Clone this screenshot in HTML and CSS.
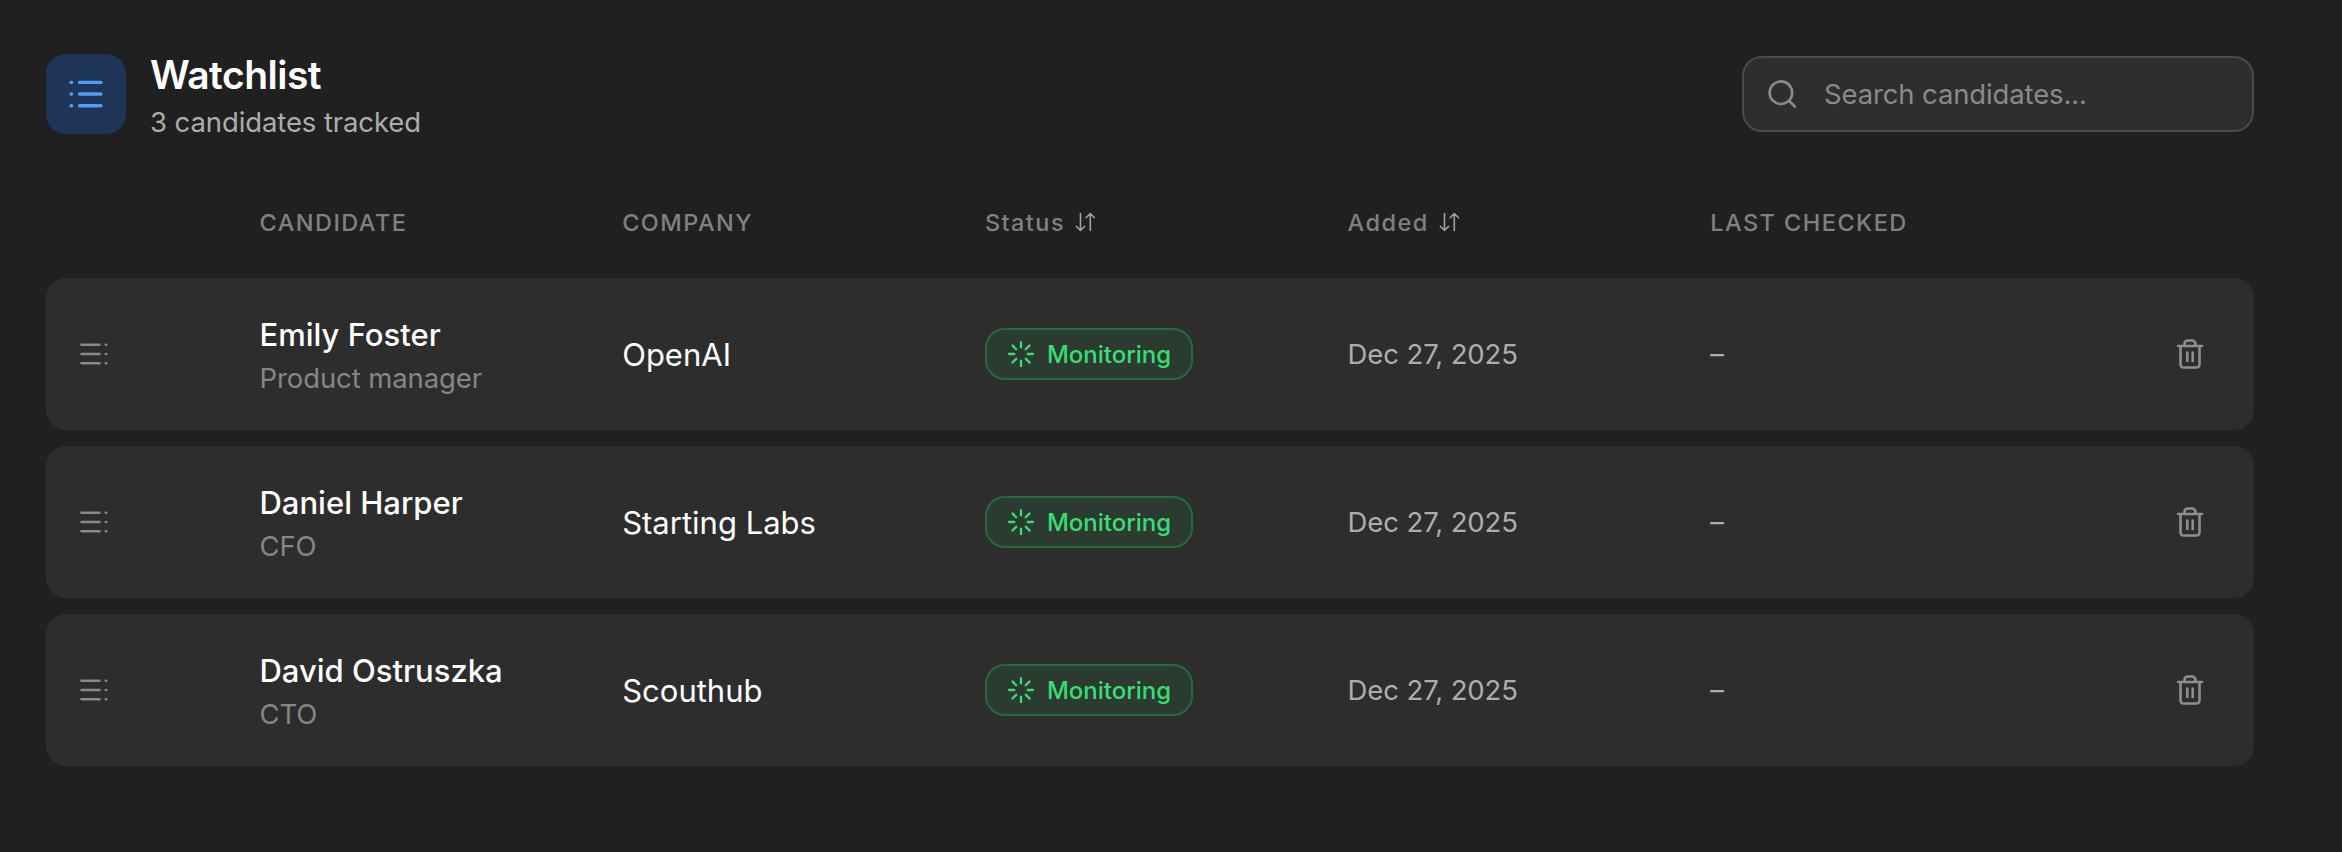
FILE: index.html
```html
<!DOCTYPE html>
<html lang="en">
<head>
    <meta charset="UTF-8">
    <title>Watchlist</title>
    <link rel="stylesheet" href="styles.css">
</head>
<body>
  <svg class="sprite" width="0" height="0">
    <symbol id="icon-handle" viewBox="0 0 32 32">
      <path d="M3.5 6.7h18M3.5 16h18M3.5 25.3h18M27.8 6.7h.4M27.8 16h.4M27.8 25.3h.4"/>
    </symbol>
    <symbol id="icon-sort" viewBox="0 0 24 24">
      <path d="M7.5 3.5v17M3.3 16.3l4.2 4.2 4.2-4.2M17.3 20.5v-17M13.1 7.7l4.2-4.2 4.2 4.2"/>
    </symbol>
    <symbol id="icon-loader" viewBox="0 0 24 24">
      <path d="M12 1.8v4.4M12 17.8v4.4M1.8 12h4.4M17.8 12h4.4M4.8 4.8l3.1 3.1M16.1 16.1l3.1 3.1M4.8 19.2l3.1-3.1M16.1 7.9l3.1-3.1"/>
    </symbol>
    <symbol id="icon-trash" viewBox="0 0 32 32">
      <path d="M4 8h24M6.5 8v18.5a3 3 0 0 0 3 3h13a3 3 0 0 0 3-3V8M10.5 8V6A3.5 3.5 0 0 1 14 2.5h4A3.5 3.5 0 0 1 21.5 6v2M13.3 14.5v8.5M18.7 14.5v8.5"/>
    </symbol>
  </svg>

  <div class="watchlist">
    <div class="header">
      <div class="header-icon">
        <svg viewBox="0 0 40 40"><path d="M13.5 8.4h21.5M13.5 20h21.5M13.5 31.8h21.5M5 8.4h.6M5 20h.6M5 31.8h.6"/></svg>
      </div>
      <div class="header-text">
        <h1>Watchlist</h1>
        <p>3 candidates tracked</p>
      </div>
      <div class="search">
        <svg viewBox="0 0 32 32"><circle cx="14.9" cy="14.7" r="11.3"/><path d="M23 22.8l6 5.9"/></svg>
        <span>Search candidates...</span>
      </div>
    </div>

    <div class="columns">
      <div></div>
      <div class="upper">Candidate</div>
      <div class="upper">Company</div>
      <div class="sortable"><span>Status</span><svg><use href="#icon-sort"/></svg></div>
      <div class="sortable"><span>Added</span><svg><use href="#icon-sort"/></svg></div>
      <div class="upper">Last checked</div>
      <div></div>
    </div>

    <div class="rows">
      <div class="row">
        <svg class="handle"><use href="#icon-handle"/></svg>
        <div class="candidate">
          <div class="name">Emily Foster</div>
          <div class="role">Product manager</div>
        </div>
        <div class="company">OpenAI</div>
        <div><div class="badge"><svg><use href="#icon-loader"/></svg><span>Monitoring</span></div></div>
        <div class="date">Dec 27, 2025</div>
        <div class="date">–</div>
        <svg class="trash"><use href="#icon-trash"/></svg>
      </div>
      <div class="row">
        <svg class="handle"><use href="#icon-handle"/></svg>
        <div class="candidate">
          <div class="name">Daniel Harper</div>
          <div class="role">CFO</div>
        </div>
        <div class="company">Starting Labs</div>
        <div><div class="badge"><svg><use href="#icon-loader"/></svg><span>Monitoring</span></div></div>
        <div class="date">Dec 27, 2025</div>
        <div class="date">–</div>
        <svg class="trash"><use href="#icon-trash"/></svg>
      </div>
      <div class="row">
        <svg class="handle"><use href="#icon-handle"/></svg>
        <div class="candidate">
          <div class="name">David Ostruszka</div>
          <div class="role">CTO</div>
        </div>
        <div class="company">Scouthub</div>
        <div><div class="badge"><svg><use href="#icon-loader"/></svg><span>Monitoring</span></div></div>
        <div class="date">Dec 27, 2025</div>
        <div class="date">–</div>
        <svg class="trash"><use href="#icon-trash"/></svg>
      </div>
    </div>
  </div>
</body>
</html>
```

FILE: styles.css
```css
* {
    box-sizing: border-box;
}

body {
    margin: 0;
    font-family: Inter, "Liberation Sans", sans-serif;
    background-color: #202020;
    color: #ffffff;
}

svg {
    fill: none;
    stroke: currentColor;
    stroke-linecap: round;
    stroke-linejoin: round;
    display: block;
    flex-shrink: 0;
}

.sprite {
    position: absolute;
}

.watchlist {
    height: 852px;
    padding: 50px 88px 0 46px;
    overflow: hidden;
}

/* Header */
.header {
    display: flex;
    align-items: center;
    height: 88px;
}

.header-icon {
    width: 80px;
    height: 80px;
    border-radius: 20px;
    background-color: #1e3557;
    color: #4c9dfc;
    display: flex;
    align-items: center;
    justify-content: center;
}

.header-icon svg {
    width: 40px;
    height: 40px;
    stroke-width: 3.4;
}

.header-text {
    flex: 1;
    margin-left: 24px;
    padding-top: 4px;
}

.header-text h1 {
    margin: 3px 0 0;
    font-size: 39px;
    line-height: 48px;
    font-weight: 600;
    letter-spacing: -0.5px;
}

.header-text p {
    margin: 1px 0 0;
    font-size: 27.5px;
    line-height: 44px;
    letter-spacing: -0.1px;
    color: #adadad;
}

.search {
    display: flex;
    align-items: center;
    gap: 26px;
    width: 512px;
    height: 76px;
    padding-left: 22px;
    border: 2px solid #4a4a4a;
    border-radius: 20px;
    background-color: #2e2e2e;
    color: #8a8a8a;
    font-size: 27.5px;
    letter-spacing: -0.13px;
}

.search svg {
    width: 32px;
    height: 32px;
    stroke-width: 2.6;
}

/* Table */
.columns,
.row {
    display: grid;
    grid-template-columns: 213.5px repeat(5, 362.7px) 1fr;
    align-items: center;
}

.columns {
    height: 72px;
    margin: 48px 0 20px;
    color: #808080;
    font-size: 23.5px;
    font-weight: 500;
    letter-spacing: 1.45px;
}

.upper {
    text-transform: uppercase;
}

.sortable {
    display: flex;
    align-items: center;
    gap: 8px;
}

.sortable svg {
    width: 24px;
    height: 24px;
    stroke-width: 1.6;
    color: #a0a0a0;
}

.rows {
    display: flex;
    flex-direction: column;
    gap: 16px;
}

.row {
    height: 152px;
    border-radius: 20px;
    background-color: #2d2d2d;
}

.handle {
    width: 32px;
    height: 32px;
    margin-left: 32px;
    stroke-width: 2.6;
    color: #8a8a8a;
}

.candidate {
    padding-top: 4px;
}

.name {
    font-size: 31px;
    line-height: 44px;
    font-weight: 500;
}

.role {
    font-size: 27.5px;
    line-height: 42px;
    letter-spacing: -0.1px;
    color: #868686;
}

.company {
    font-size: 31px;
}

.badge {
    display: inline-flex;
    align-items: center;
    gap: 12px;
    width: 208px;
    height: 52px;
    padding-left: 20px;
    border: 2px solid #256c3d;
    border-radius: 20px;
    background-color: #2b3b31;
    color: #39dd70;
    font-size: 24px;
    font-weight: 500;
    vertical-align: middle;
}

.badge svg {
    width: 28px;
    height: 28px;
    stroke-width: 2;
}

.date {
    font-size: 27.5px;
    letter-spacing: -0.1px;
    color: #adadad;
}

.trash {
    width: 32px;
    height: 32px;
    margin-left: 101px;
    stroke-width: 2.6;
    color: #8f8f8f;
}
```
